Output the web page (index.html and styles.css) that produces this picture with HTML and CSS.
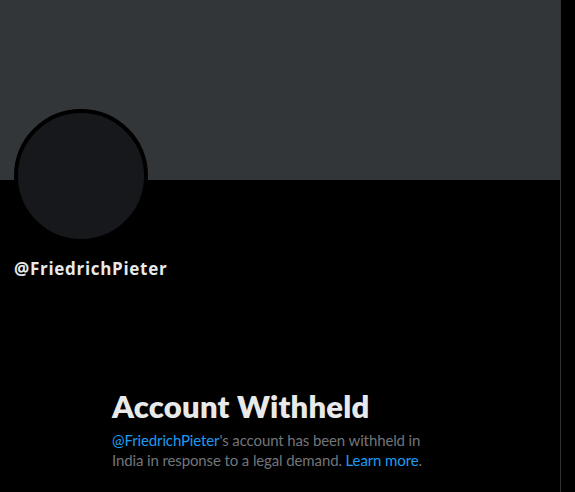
FILE: index.html
```html
<!DOCTYPE html>
<html lang="en">
<head>
<meta charset="utf-8">
<title>@FriedrichPieter</title>
<link rel="stylesheet" href="styles.css">
</head>
<body>
<main class="column">
  <div class="banner"></div>
  <section class="profile">
    <div class="avatar"></div>
    <div class="handle">@FriedrichPieter</div>
  </section>
  <section class="withheld">
    <h1 class="withheld-title">Account Withheld</h1>
    <p class="withheld-text"><a class="link" href="#">@FriedrichPieter</a>'s account has been withheld in India in response to a legal demand. <a class="link" href="#">Learn more</a>.</p>
  </section>
</main>
</body>
</html>
```
FILE: styles.css
```css
html, body {
  margin: 0;
  padding: 0;
  background: #000;
  height: 100%;
}
body {
  font-family: "Lato", "Noto Sans", sans-serif;
  color: #e7e9ea;
  overflow: hidden;
}
.column {
  width: 560px;
  min-height: 100%;
  border-right: 1px solid #2f3336;
  box-sizing: content-box;
}
.banner {
  height: 180px;
  background: #333639;
}
.profile {
  padding: 0 14px;
}
.avatar {
  width: 126px;
  height: 126px;
  margin-top: -71px;
  border: 4px solid #000;
  border-radius: 50%;
  background: #16181c;
}
.handle {
  margin-top: 14px;
  font-family: "Open Sans", "Noto Sans", sans-serif;
  font-size: 17px;
  font-weight: 700;
  line-height: 24px;
  letter-spacing: 0.7px;
}
.withheld {
  width: 336px;
  margin: 107px auto 0;
}
.withheld-title {
  margin: 0;
  font-size: 31px;
  font-weight: 800;
  line-height: 36px;
  letter-spacing: 0.2px;
}
.withheld-text {
  margin: 6px 0 0;
  font-size: 15px;
  line-height: 20px;
  letter-spacing: -0.12px;
  color: #71767b;
}
.link {
  color: #1d9bf0;
  text-decoration: none;
}
```
